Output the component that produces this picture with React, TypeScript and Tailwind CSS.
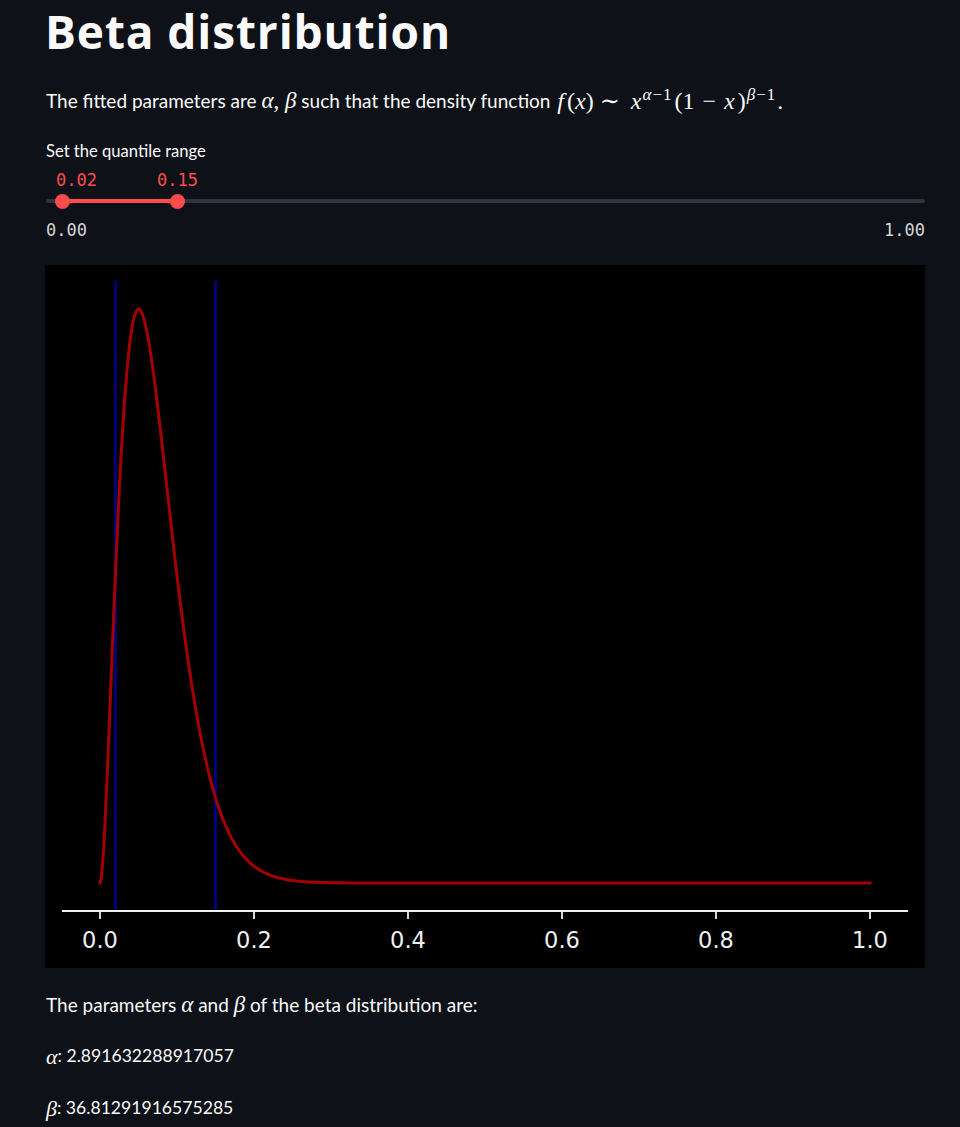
import React from "react";

const A = 2.891632288917057;
const B = 36.81291916575285;

function buildPath() {
  const n = 800;
  const vals: number[] = [];
  let max = 0;
  for (let i = 0; i <= n; i++) {
    const x = i / n;
    const v = x <= 0 || x >= 1 ? 0 : Math.exp((A - 1) * Math.log(x) + (B - 1) * Math.log(1 - x));
    vals.push(v);
    if (v > max) max = v;
  }
  const x0 = 55;
  const sx = 770;
  const y0 = 618;
  const h = 618 - 44;
  let d = "";
  vals.forEach((v, i) => {
    const px = x0 + (sx * i) / n;
    const py = y0 - (v / max) * h;
    d += (i === 0 ? "M" : "L") + px.toFixed(2) + " " + py.toFixed(2) + " ";
  });
  return d;
}

function Chart() {
  const d = buildPath();
  const ticks = [0, 0.2, 0.4, 0.6, 0.8, 1.0];
  return (
    <svg width="880" height="703" viewBox="0 0 880 703" className="block bg-black">
      <line x1={55 + 770 * 0.02} x2={55 + 770 * 0.02} y1={16} y2={646} stroke="#00008b" strokeWidth={2.6} />
      <line x1={55 + 770 * 0.15} x2={55 + 770 * 0.15} y1={16} y2={646} stroke="#00008b" strokeWidth={2.6} />
      <path d={d} fill="none" stroke="#a50000" strokeWidth={3} strokeLinejoin="round" strokeLinecap="square" />
      <line x1={17} x2={863} y1={646} y2={646} stroke="#f0f0f0" strokeWidth={2} />
      {ticks.map((t) => {
        const x = 55 + 770 * t;
        return (
          <g key={t}>
            <line x1={x} x2={x} y1={646} y2={654} stroke="#f0f0f0" strokeWidth={1.8} />
            <text
              x={x}
              y={683}
              textAnchor="middle"
              fill="#f0f0f0"
              fontSize="22.5"
              fontFamily="'DejaVu Sans', sans-serif"
            >
              {t.toFixed(1)}
            </text>
          </g>
        );
      })}
    </svg>
  );
}

const mathFont = { fontFamily: "'Liberation Serif', 'DejaVu Serif', serif" };

export default function App() {
  return (
    <div className="min-h-[1127px] bg-[#0e1117] text-[#fafafa]" style={{ fontFamily: "Lato, 'Noto Sans', sans-serif" }}>
      <div className="ml-[45px] w-[880px]">
        <h1
          className="pt-[4px] text-[46px] font-bold leading-[1.2] tracking-[0.9px]"
          style={{ fontFamily: "'Open Sans', 'Noto Sans', sans-serif" }}
        >
          Beta distribution
        </h1>
        <p className="mt-[30px] h-[24px] text-[19px] leading-[24px] flex items-center pl-px whitespace-nowrap">
          <span>The fitted parameters are&nbsp;</span>
          <span className="text-[23px] italic" style={mathFont}>α</span>
          <span className="text-[23px]" style={mathFont}>,&nbsp;</span>
          <span className="text-[23px] italic" style={mathFont}>β</span>
          <span>&nbsp;such that the density function&nbsp;</span>
          <span className="text-[24px] whitespace-nowrap flex items-baseline ml-[2px]" style={mathFont}>
            <i>f</i>
            <span className="ml-[3px]">(</span>
            <i>x</i>
            <span>)</span>
            <span className="ml-[6px] mr-[11px]">∼</span>
            <i>x</i>
            <span className="text-[17px] relative -top-[9px] ml-[1px] leading-none">
              <i>α</i>
              <span className="mx-[1px]">−</span>1
            </span>
            <span className="ml-[3px]">(</span>
            <span>1</span>
            <span className="mx-[8px]">−</span>
            <i>x</i>
            <span className="ml-[3px]">)</span>
            <span className="text-[17px] relative -top-[9px] ml-[1px] leading-none">
              <i>β</i>
              <span className="mx-[1px]">−</span>1
            </span>
            <span className="ml-[2px]">.</span>
          </span>
        </p>
        <div className="mt-[28px] h-[20px] flex items-center text-[16.6px] pl-px">Set the quantile range</div>
        <div className="relative mt-[8px] h-[90px]" style={{ fontFamily: "'DejaVu Sans Mono', 'Liberation Mono', monospace" }}>
          <div className="absolute left-[11px] top-[0px] text-[17px] leading-[22px] text-[#ff4b4b]">0.02</div>
          <div className="absolute left-[112px] top-[0px] text-[17px] leading-[22px] text-[#ff4b4b]">0.15</div>
          <div className="absolute left-[1px] right-0 top-[30px] h-[4px] rounded-full bg-[#31333f]" />
          <div className="absolute left-[17px] w-[115px] top-[30px] h-[4px] bg-[#ff4b4b]" />
          <div className="absolute left-[10px] top-[25px] w-[15px] h-[15px] rounded-full bg-[#ff4b4b]" />
          <div className="absolute left-[125px] top-[25px] w-[15px] h-[15px] rounded-full bg-[#ff4b4b]" />
          <div className="absolute left-[1px] top-[50px] text-[17px] leading-[22px] text-[#d5d5d8]">0.00</div>
          <div className="absolute right-0 top-[50px] text-[17px] leading-[22px] text-[#d5d5d8]">1.00</div>
        </div>
        <div className="mt-[6px]">
          <Chart />
        </div>
        <p className="mt-[25px] h-[24px] flex items-center text-[19px] pl-px">
          <span>The parameters&nbsp;</span>
          <span className="text-[23px] italic" style={mathFont}>α</span>
          <span>&nbsp;and&nbsp;</span>
          <span className="text-[23px] italic" style={mathFont}>β</span>
          <span>&nbsp;of the beta distribution are:</span>
        </p>
        <p className="mt-[27px] h-[24px] flex items-center text-[17.6px] pl-px">
          <span className="text-[22px] italic" style={mathFont}>α</span>
          <span>:&nbsp;2.891632288917057</span>
        </p>
        <p className="mt-[28px] h-[24px] flex items-center text-[17.6px] pl-px">
          <span className="text-[22px] italic" style={mathFont}>β</span>
          <span>:&nbsp;36.81291916575285</span>
        </p>
      </div>
    </div>
  );
}
